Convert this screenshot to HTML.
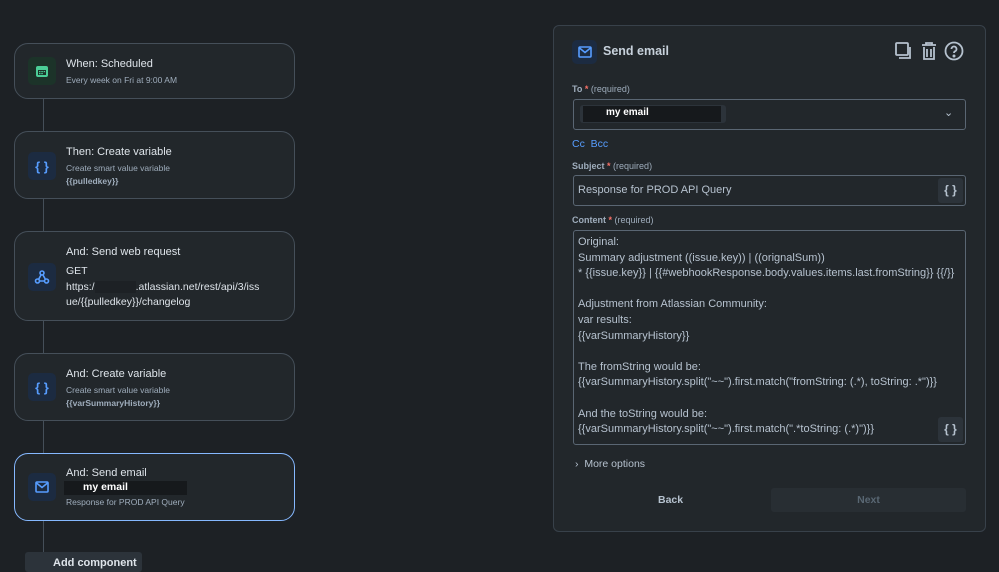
<!DOCTYPE html>
<html><head><style>
*{box-sizing:border-box;margin:0;padding:0}
body{width:999px;height:564px;background:#1d2125;font-family:"Liberation Sans",sans-serif;color:#b6c2cf;position:relative;overflow:hidden}
.a{position:absolute}
.card{position:absolute;left:14px;width:281px;background:#22272b;border:1px solid #454f59;border-radius:14px}
.ic{position:absolute;left:13px;width:28px;height:28px;border-radius:5px;background:#1c2b41;color:#579dff;font-size:13px;font-weight:bold;display:flex;align-items:center;justify-content:center}
.t{position:absolute;left:51px;font-size:11px;color:#dee4ea}
.s{position:absolute;left:51px;font-size:8.5px;color:#9fadbc}
.line{position:absolute;left:43px;width:1px;background:#454f59}
.lbl{position:absolute;left:572px;font-size:9px;color:#9fadbc;font-weight:bold}
.lbl b{color:#f87168}
.lbl span{font-weight:normal}
.box{position:absolute;left:573px;width:393px;border:1px solid #5a6673;border-radius:3px;background:#22272b}
.ct{position:absolute;left:578px;font-size:11px;color:#b6c2cf;line-height:15.6px}
</style></head><body>
<div class="line" style="top:98px;height:455px"></div>

<div class="card" style="top:43px;height:56px">
<div class="ic" style="top:13px;background:#1c3329;color:#4bce97"><svg width="14" height="14" viewBox="0 0 14 14"><rect x="1" y="2" width="12" height="11" rx="2" fill="#4bce97"/><rect x="3" y="6" width="8" height="5" fill="#1c3329"/><rect x="4" y="7" width="1.5" height="1.2" fill="#4bce97"/><rect x="6.3" y="7" width="1.5" height="1.2" fill="#4bce97"/><rect x="8.6" y="7" width="1.5" height="1.2" fill="#4bce97"/><rect x="4" y="9" width="1.5" height="1.2" fill="#4bce97"/><rect x="6.3" y="9" width="1.5" height="1.2" fill="#4bce97"/></svg></div>
<div class="t" style="top:14px">When: Scheduled</div>
<div class="s" style="top:31px">Every week on Fri at 9:00 AM</div></div>

<div class="card" style="top:131px;height:68px">
<div class="ic" style="top:20px">{ }</div>
<div class="t" style="top:14px">Then: Create variable</div>
<div class="s" style="top:31px">Create smart value variable</div>
<div class="s" style="top:44px;font-weight:bold">{{pulledkey}}</div></div>

<div class="card" style="top:231px;height:90px">
<div class="ic" style="top:31px"><svg width="16" height="16" viewBox="0 0 16 16" fill="none" stroke="#579dff" stroke-width="1.6"><circle cx="8" cy="4" r="2"/><circle cx="3.5" cy="12" r="2"/><circle cx="12.5" cy="12" r="2"/><path d="M7 6L4.5 10.5M9 6l2.5 4.5M5.5 12h5"/></svg></div>
<div class="t" style="top:14px">And: Send web request</div>
<div class="t" style="top:32px;font-size:10.5px;line-height:15.5px">GET<br>https:/<span style="display:inline-block;width:41px;height:12px;background:#1d2125;vertical-align:middle"></span>.atlassian.net/rest/api/3/iss<br>ue/{{pulledkey}}/changelog</div></div>

<div class="card" style="top:353px;height:68px">
<div class="ic" style="top:19px">{ }</div>
<div class="t" style="top:14px">And: Create variable</div>
<div class="s" style="top:31px">Create smart value variable</div>
<div class="s" style="top:44px;font-weight:bold">{{varSummaryHistory}}</div></div>

<div class="card" style="top:453px;height:68px;border:1.5px solid #85b8ff">
<div class="ic" style="top:19px"><svg width="14" height="12" viewBox="0 0 14 12" fill="none" stroke="#579dff" stroke-width="1.6"><rect x="1" y="1" width="12" height="10" rx="1"/><path d="M1.5 2l5.5 4.5L12.5 2"/></svg></div>
<div class="t" style="top:13px">And: Send email</div>
<div class="a" style="left:49px;top:27px;width:123px;height:14px;background:#16191c;color:#fff;font-size:10.5px;font-weight:bold;padding-left:19px">my email</div>
<div class="s" style="top:43px">Response for PROD API Query</div></div>

<div class="a" style="left:25px;top:552px;width:117px;height:20px;background:#2c333a;border-radius:3px;font-size:11px;color:#dee4ea;padding:5px 0 0 28px;font-weight:bold">Add component</div>

<div class="a" style="left:553px;top:25px;width:433px;height:507px;background:#22272b;border:1px solid #38414a;border-radius:6px"></div>
<div class="a" style="left:572px;top:40px;width:25px;height:24px;background:#1c2b41;border-radius:5px;display:flex;align-items:center;justify-content:center"><svg width="14" height="12" viewBox="0 0 14 12" fill="none" stroke="#579dff" stroke-width="1.6"><rect x="1" y="1" width="12" height="10" rx="1"/><path d="M1.5 2l5.5 4.5L12.5 2"/></svg></div>
<div class="a" style="left:603px;top:44px;font-size:12.5px;font-weight:bold;color:#c7d1db">Send email</div>
<svg class="a" style="left:893px;top:40px" width="72" height="22" viewBox="0 0 72 22" fill="none" stroke="#b6c2cf" stroke-width="1.8"><rect x="3" y="3" width="12" height="12" rx="1"/><path d="M6 18h11V7"/><path d="M29 5h14M33 5V3h6v2M31 7v12h10V7M34 9v8M38 9v8"/><circle cx="61" cy="11" r="8.5"/><path d="M58.5 9a2.5 2.5 0 1 1 3.5 2.3c-.8.4-1 1-1 1.7"/><circle cx="61" cy="16" r=".6" fill="#b6c2cf"/></svg>

<div class="lbl" style="top:84px">To <b>*</b> <span>(required)</span></div>
<div class="box" style="top:99px;height:31px"></div>
<div class="a" style="left:580px;top:105px;width:146px;height:18px;background:#2c333a;border-radius:3px"></div>
<div class="a" style="left:583px;top:106px;width:138px;height:16px;background:#16191c;color:#fff;font-size:10px;font-weight:bold;padding:1px 0 0 23px">my email</div>
<div class="a" style="left:944px;top:106px;font-size:11px;color:#b6c2cf">⌄</div>
<div class="a" style="left:572px;top:138px;font-size:10.5px;color:#579dff">Cc&nbsp;&nbsp;Bcc</div>

<div class="lbl" style="top:161px">Subject <b>*</b> <span>(required)</span></div>
<div class="box" style="top:175px;height:31px"></div>
<div class="ct" style="top:183px">Response for PROD API Query</div>
<div class="a" style="left:938px;top:178px;width:25px;height:25px;background:#2c333a;border-radius:3px;color:#b6c2cf;font-size:12px;font-weight:bold;text-align:center;line-height:24px">{ }</div>

<div class="lbl" style="top:215px">Content <b>*</b> <span>(required)</span></div>
<div class="box" style="top:230px;height:215px"></div>
<div class="ct" style="top:235px">Original:<br>Summary adjustment ((issue.key)) | ((orignalSum))<br>* {{issue.key}} | {{#webhookResponse.body.values.items.last.fromString}} {{/}}<br><br>Adjustment from Atlassian Community:<br>var results:<br>{{varSummaryHistory}}<br><br>The fromString would be:<br>{{varSummaryHistory.split("~~").first.match("fromString: (.*), toString: .*")}}<br><br>And the toString would be:<br>{{varSummaryHistory.split("~~").first.match(".*toString: (.*)")}}</div>
<div class="a" style="left:938px;top:417px;width:25px;height:25px;background:#2c333a;border-radius:3px;color:#b6c2cf;font-size:12px;font-weight:bold;text-align:center;line-height:24px">{ }</div>

<div class="a" style="left:575px;top:458px;font-size:10.5px;color:#b6c2cf">›&nbsp;&nbsp;More options</div>
<div class="a" style="left:658px;top:494px;font-size:10.5px;font-weight:bold;color:#b6c2cf">Back</div>
<div class="a" style="left:771px;top:488px;width:195px;height:24px;background:#282e33;border-radius:3px;color:#596773;font-size:10.5px;font-weight:bold;text-align:center;line-height:24px">Next</div>
</body></html>
